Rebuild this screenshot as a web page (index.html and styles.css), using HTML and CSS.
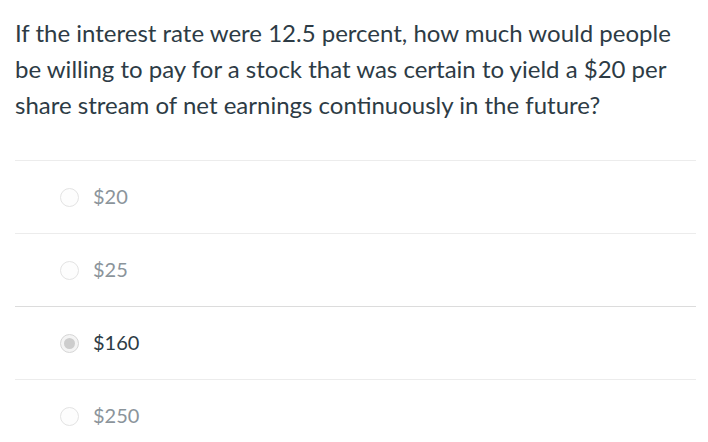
FILE: index.html
```html
<!DOCTYPE html>
<html>
<head>
<meta charset="utf-8">
<link rel="stylesheet" href="styles.css">
</head>
<body>
<div class="quiz">
  <p class="question">If the interest rate were 12.5 percent, how much would people be willing to pay for a stock that was certain to yield a $20 per share stream of net earnings continuously in the future?</p>
  <ul class="answers">
    <li class="answer"><span class="radio"></span><span class="label">$20</span></li>
    <li class="answer"><span class="radio"></span><span class="label">$25</span></li>
    <li class="answer selected"><span class="radio"><span class="dot"></span></span><span class="label">$160</span></li>
    <li class="answer"><span class="radio"></span><span class="label">$250</span></li>
  </ul>
</div>
</body>
</html>
```
FILE: styles.css
```css
html, body {
  margin: 0;
  padding: 0;
  background: #ffffff;
}
body {
  font-family: Lato, "Liberation Sans", sans-serif;
  color: #2d3b45;
}
.quiz {
  padding: 15px 12px 0 15px;
}
.question {
  margin: 0 0 37px 0;
  font-size: 24px;
  line-height: 36px;
  color: #2d3b45;
}
.answers {
  list-style: none;
  margin: 0;
  padding: 0;
}
.answer {
  display: flex;
  align-items: center;
  height: 72px;
  border-top: 1px solid #ececec;
  padding-left: 45px;
}
.answer.selected {
  border-top-color: #dcdcdc;
}
.radio {
  box-sizing: border-box;
  width: 19px;
  height: 19px;
  border-radius: 50%;
  border: 1px solid #e3e3e3;
  background: #fdfdfd;
  display: flex;
  align-items: center;
  justify-content: center;
  margin-right: 14px;
}
.selected .radio {
  border-color: #d6d6d6;
  background: #f4f4f4;
}
.dot {
  width: 11px;
  height: 11px;
  border-radius: 50%;
  background: #cdcdcd;
}
.label {
  font-size: 20px;
  line-height: 24px;
  margin-top: -2px;
  color: #8b949b;
}
.selected .label {
  color: #2d3b45;
}
```
